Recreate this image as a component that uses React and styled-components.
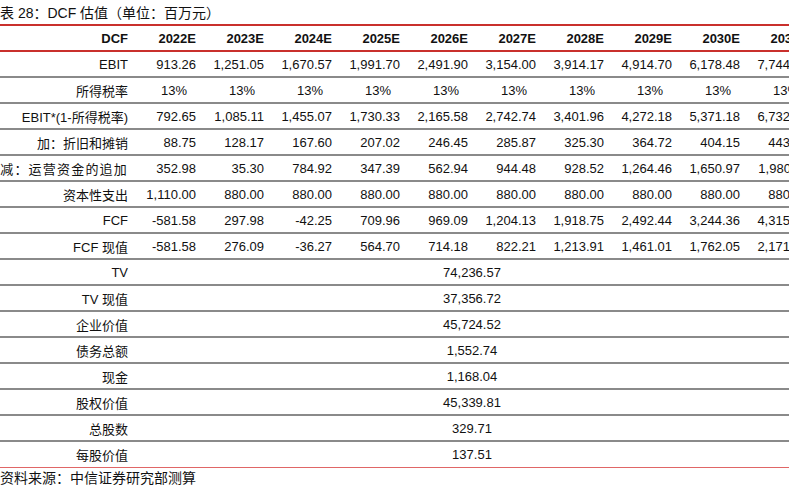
import React from "react";
import styled, { createGlobalStyle } from "styled-components";

const GlobalStyle = createGlobalStyle`
  html, body {
    margin: 0;
    padding: 0;
    background: #fff;
    overflow: hidden;
  }
  body {
    font-family: "Liberation Sans", "Noto Sans CJK SC", sans-serif;
    color: #111;
  }
`;

const Page = styled.div`
  width: 820px;
`;

const Caption = styled.div`
  height: 24px;
  line-height: 26px;
  font-size: 14px;
  white-space: nowrap;
`;

const Grid = styled.div`
  width: 812px;
  font-size: 13px;
  border-top: 2px solid #c9302c;
`;

const Row = styled.div`
  display: grid;
  grid-template-columns: 132px repeat(10, 68px);
  align-items: center;
  box-sizing: border-box;
  height: 26px;
  border-bottom: ${(p) =>
    p.$head ? "2px solid #c9302c" : p.$last ? "1px solid #e06666" : "2px solid #8a8a8a"};
  font-weight: ${(p) => (p.$head ? "bold" : "normal")};
`;

const Label = styled.div`
  padding-right: 4px;
  text-align: right;
  white-space: nowrap;
  letter-spacing: ${(p) => (p.$tight ? "1.2px" : "0")};
`;

const Cell = styled.div`
  padding-right: ${(p) => (p.$pct ? "13px" : "4px")};
  text-align: right;
  white-space: nowrap;
`;

const Span = styled.div`
  grid-column: 2 / span 10;
  text-align: center;
  white-space: nowrap;
`;

const Source = styled.div`
  height: 20px;
  line-height: 21px;
  font-size: 14px;
  white-space: nowrap;
`;

const years = ["2022E", "2023E", "2024E", "2025E", "2026E", "2027E", "2028E", "2029E", "2030E", "2031E"];

const rows = [
  { label: "EBIT", v: ["913.26", "1,251.05", "1,670.57", "1,991.70", "2,491.90", "3,154.00", "3,914.17", "4,914.70", "6,178.48", "7,744.32"] },
  { label: "所得税率", pct: true, v: ["13%", "13%", "13%", "13%", "13%", "13%", "13%", "13%", "13%", "13%"] },
  { label: "EBIT*(1-所得税率)", v: ["792.65", "1,085.11", "1,455.07", "1,730.33", "2,165.58", "2,742.74", "3,401.96", "4,272.18", "5,371.18", "6,732.45"] },
  { label: "加：折旧和摊销", v: ["88.75", "128.17", "167.60", "207.02", "246.45", "285.87", "325.30", "364.72", "404.15", "443.57"] },
  { label: "减：运营资金的追加", tight: true, v: ["352.98", "35.30", "784.92", "347.39", "562.94", "944.48", "928.52", "1,264.46", "1,650.97", "1,980.11"] },
  { label: "资本性支出", v: ["1,110.00", "880.00", "880.00", "880.00", "880.00", "880.00", "880.00", "880.00", "880.00", "880.00"] },
  { label: "FCF", v: ["-581.58", "297.98", "-42.25", "709.96", "969.09", "1,204.13", "1,918.75", "2,492.44", "3,244.36", "4,315.91"] },
  { label: "FCF 现值", v: ["-581.58", "276.09", "-36.27", "564.70", "714.18", "822.21", "1,213.91", "1,461.01", "1,762.05", "2,171.36"] },
];

const totals = [
  ["TV", "74,236.57"],
  ["TV 现值", "37,356.72"],
  ["企业价值", "45,724.52"],
  ["债务总额", "1,552.74"],
  ["现金", "1,168.04"],
  ["股权价值", "45,339.81"],
  ["总股数", "329.71"],
  ["每股价值", "137.51"],
];

export default function App() {
  return (
    <Page>
      <GlobalStyle />
      <Caption>表 28：DCF 估值（单位：百万元）</Caption>
      <Grid>
        <Row $head>
          <Label>DCF</Label>
          {years.map((y) => (
            <Cell key={y}>{y}</Cell>
          ))}
        </Row>
        {rows.map((r) => (
          <Row key={r.label}>
            <Label $tight={r.tight}>{r.label}</Label>
            {r.v.map((x, i) => (
              <Cell key={i} $pct={r.pct}>{x}</Cell>
            ))}
          </Row>
        ))}
        {totals.map(([label, value], i) => (
          <Row key={label} $last={i === totals.length - 1}>
            <Label>{label}</Label>
            <Span>{value}</Span>
          </Row>
        ))}
      </Grid>
      <Source>资料来源：中信证券研究部测算</Source>
    </Page>
  );
}
